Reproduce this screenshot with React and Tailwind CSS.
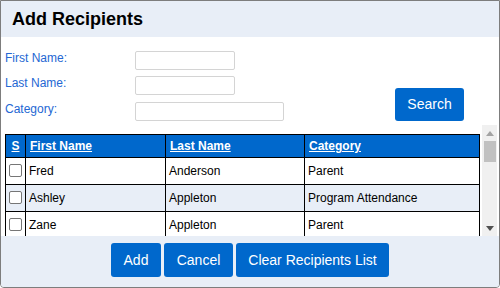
import React from 'react';

const rows = [
  { first: 'Fred', last: 'Anderson', cat: 'Parent' },
  { first: 'Ashley', last: 'Appleton', cat: 'Program Attendance' },
  { first: 'Zane', last: 'Appleton', cat: 'Parent' },
];

function Field({ label, width }) {
  return (
    <div className='flex items-center h-[18px]'>
      <span className='w-[130px] -mt-[5px] text-[12px] text-[#2467d3]'>{label}</span>
      <input type='text' className={`${width} h-[19px] border border-[#d4d4d4] rounded-[2px] bg-white`} />
    </div>
  );
}

function App() {
  return (
    <div className="w-[500px] h-[288px] flex flex-col border border-[#7d7d7d] rounded-b-[4px] overflow-hidden bg-white font-['Liberation_Sans',Arial,sans-serif]">

      {/* Header */}
      <div className='h-[36px] shrink-0 bg-[#e8eef7] px-[11px] flex items-center'>
        <h1 className='text-[18px] font-bold text-black'>Add Recipients</h1>
      </div>

      {/* Search form */}
      <div className='h-[88px] shrink-0 flex justify-between items-end pl-[4px] pr-[35px] pb-[4px]'>
        <div className='flex flex-col gap-[7px] pb-[1px]'>
          <Field label='First Name:' width='w-[100px]' />
          <Field label='Last Name:' width='w-[100px]' />
          <div className='mt-[1px]'>
            <Field label='Category:' width='w-[149px]' />
          </div>
        </div>
        <button className='w-[69px] h-[33px] bg-[#0068cc] text-white text-[14px] rounded-[3px]'>Search</button>
      </div>

      {/* Results table */}
      <div className='flex-1 flex ml-[4px] mr-[2px] overflow-hidden'>
        <div className='w-[474px] pt-[9px]'>
          <table className='w-[474px] border-collapse table-fixed text-[12px]'>
            <colgroup>
              <col className='w-[20px]' />
              <col className='w-[140px]' />
              <col className='w-[139px]' />
              <col className='w-[175px]' />
            </colgroup>
            <thead>
              <tr className='h-[23px] bg-[#0068cc] text-white'>
                <th className='border border-black font-bold underline text-center'>S</th>
                <th className='border border-black font-bold underline text-left pl-[4px]'>First Name</th>
                <th className='border border-black font-bold underline text-left pl-[4px]'>Last Name</th>
                <th className='border border-black font-bold underline text-left pl-[4px]'>Category</th>
              </tr>
            </thead>
            <tbody>
              {rows.map((r, i) => (
                <tr key={i} className={`h-[27px] ${i % 2 === 1 ? 'bg-[#e8eef7]' : 'bg-white'}`}>
                  <td className='border border-black text-center'>
                    <span className='inline-block w-[13px] h-[13px] mt-[4px] border border-[#767676] rounded-[2px] bg-white'></span>
                  </td>
                  <td className='border border-black pl-[3px] text-black'>{r.first}</td>
                  <td className='border border-black pl-[3px] text-black'>{r.last}</td>
                  <td className='border border-black pl-[3px] text-black'>{r.cat}</td>
                </tr>
              ))}
            </tbody>
          </table>
        </div>

        {/* Scrollbar */}
        <div className='ml-[3px] w-[17px] bg-[#f0f0f0] flex flex-col items-center'>
          <div className='h-[16px] flex items-center justify-center'>
            <svg width='8' height='5' viewBox='0 0 8 5'><path d='M4 0 L8 5 L0 5 Z' fill='#a3a3a3' /></svg>
          </div>
          <div className='w-[12px] h-[21px] bg-[#c1c1c1]'></div>
          <div className='flex-1'></div>
          <div className='h-[16px] flex items-center justify-center'>
            <svg width='8' height='5' viewBox='0 0 8 5'><path d='M0 0 L8 0 L4 5 Z' fill='#505050' /></svg>
          </div>
        </div>
      </div>

      {/* Footer buttons */}
      <div className='h-[51px] shrink-0 bg-[#e8eef7] flex justify-center items-start pt-[7px] gap-[3px]'>
        <button className='w-[50px] h-[34px] bg-[#0068cc] text-white text-[14px] rounded-[3px]'>Add</button>
        <button className='w-[69px] h-[34px] bg-[#0068cc] text-white text-[14px] rounded-[3px]'>Cancel</button>
        <button className='w-[153px] h-[34px] bg-[#0068cc] text-white text-[14px] rounded-[3px]'>Clear Recipients List</button>
      </div>
    </div>
  );
}

export default App;
